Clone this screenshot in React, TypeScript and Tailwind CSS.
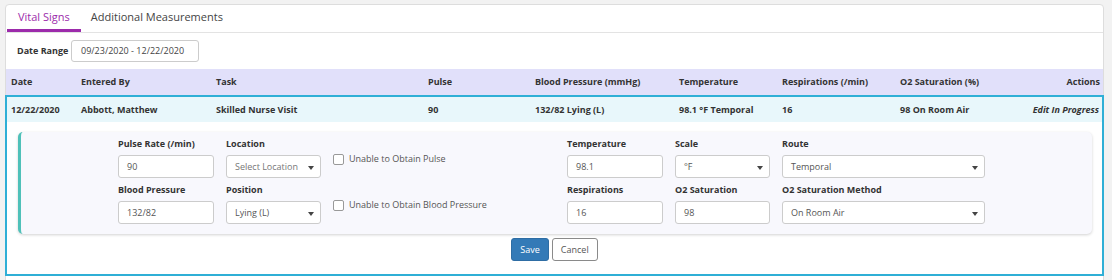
import React from "react";

const font = { fontFamily: '"Open Sans", "Liberation Sans", sans-serif' };

const columns = [
  { key: "date", label: "Date", value: "12/22/2020" },
  { key: "by", label: "Entered By", value: "Abbott, Matthew" },
  { key: "task", label: "Task", value: "Skilled Nurse Visit" },
  { key: "pulse", label: "Pulse", value: "90" },
  { key: "bp", label: "Blood Pressure (mmHg)", value: "132/82 Lying (L)" },
  { key: "temp", label: "Temperature", value: "98.1 °F Temporal" },
  { key: "resp", label: "Respirations (/min)", value: "16" },
  { key: "o2", label: "O2 Saturation (%)", value: "98 On Room Air" },
];

const gridCols =
  "grid grid-cols-[70px_135px_212px_107px_144px_103px_118px_1fr_auto] items-center";

function TextInput({ value, w }: { value: string; w: string }) {
  return (
    <div
      className={`${w} h-[23px] rounded-[3px] border border-[#cccccc] bg-white pl-[8px] text-[9px] leading-[21px] text-[#555]`}
    >
      {value}
    </div>
  );
}

function Select({ value, w, muted }: { value: string; w: string; muted?: boolean }) {
  return (
    <div
      className={`${w} flex h-[23px] items-center justify-between rounded-[3px] border border-[#cccccc] bg-white pl-[8px] pr-[6px] text-[9px] ${
        muted ? "text-[#777]" : "text-[#555]"
      }`}
    >
      <span className="whitespace-nowrap">{value}</span>
      <span className="mt-[2px] h-0 w-0 border-x-[3px] border-t-[4px] border-x-transparent border-t-[#444]" />
    </div>
  );
}

function Field({ label, children }: { label: string; children: React.ReactNode }) {
  return (
    <div className="flex flex-col gap-[5px]">
      <div className="whitespace-nowrap text-[9px] font-bold leading-[12px] text-[#333]">{label}</div>
      {children}
    </div>
  );
}

function Check({ label }: { label: string }) {
  return (
    <div className="flex items-center gap-[5px] self-start pt-[16px] text-[9px] leading-[11px] text-[#555]">
      <span className="h-[11px] w-[11px] rounded-[2px] border border-[#999] bg-white" />
      <span className="-mt-[2px] whitespace-nowrap">{label}</span>
    </div>
  );
}

export default function App() {
  return (
    <div className="h-[280px] overflow-hidden bg-[#f2f2f2] pl-[5px] pr-[8px] pt-[4px]" style={font}>
      <div className="rounded-[4px] border border-[#dddddd] bg-white">
        {/* tabs */}
        <div className="flex h-[28px] items-end border-b border-[#e3e3e3] pl-px">
          <div className="border-b-[3px] border-[#9c2bab] px-[11px] pb-[4px] text-[11px] text-[#9c2bab]">
            Vital Signs
          </div>
          <div className="px-[10px] pb-[7px] text-[11px] text-[#444]">Additional Measurements</div>
        </div>

        {/* date range */}
        <div className="flex h-[36px] items-center pl-[11px]">
          <span className="w-[54px] shrink-0 text-[9px] font-bold text-[#333]">Date Range</span>
          <div className="h-[22px] w-[128px] whitespace-nowrap rounded-[3px] border border-[#cccccc] pl-[9px] text-[9px] leading-[20px] text-[#444]">
            09/23/2020 - 12/22/2020
          </div>
        </div>

        {/* header */}
        <div className={`${gridCols} h-[26px] bg-[#e1e0fa] pl-[5px] pr-[3px] text-[9px] font-bold text-[#333]`}>
          {columns.map((c) => (
            <div key={c.key} className="whitespace-nowrap">{c.label}</div>
          ))}
          <div className="text-right">Actions</div>
        </div>

        {/* selected row */}
        <div className="-mx-px -mb-px border-2 border-[#2fafd6] pb-[13px]">
          <div className={`${gridCols} h-[25px] bg-[#e8f7fb] pl-[4px] pr-[3px] text-[9px] font-bold text-[#333]`}>
            {columns.map((c) => (
              <div key={c.key} className="whitespace-nowrap">{c.value}</div>
            ))}
            <div className="text-right italic">Edit In Progress</div>
          </div>

          <div className="ml-[11px] mr-[10px] mt-[10px] rounded-[5px] border-l-[3px] border-[#4fc1b9] bg-[#f8f8fd] pb-[10px] pl-[97px] pt-[6px] shadow-[0_1px_3px_rgba(0,0,0,0.18)]">
            <div className="flex">
              <div className="grid w-[449px] grid-cols-[96px_95px_1fr] gap-x-[12px] gap-y-[6px]">
                <Field label="Pulse Rate (/min)">
                  <TextInput value="90" w="w-[96px]" />
                </Field>
                <Field label="Location">
                  <Select value="Select Location" w="w-[95px]" muted />
                </Field>
                <Check label="Unable to Obtain Pulse" />
                <Field label="Blood Pressure">
                  <TextInput value="132/82" w="w-[96px]" />
                </Field>
                <Field label="Position">
                  <Select value="Lying (L)" w="w-[95px]" />
                </Field>
                <Check label="Unable to Obtain Blood Pressure" />
              </div>
              <div className="grid grid-cols-[96px_95px_203px] gap-x-[12px] gap-y-[6px]">
                <Field label="Temperature">
                  <TextInput value="98.1" w="w-[96px]" />
                </Field>
                <Field label="Scale">
                  <Select value="°F" w="w-[95px]" />
                </Field>
                <Field label="Route">
                  <Select value="Temporal" w="w-[203px]" />
                </Field>
                <Field label="Respirations">
                  <TextInput value="16" w="w-[96px]" />
                </Field>
                <Field label="O2 Saturation">
                  <TextInput value="98" w="w-[95px]" />
                </Field>
                <Field label="O2 Saturation Method">
                  <Select value="On Room Air" w="w-[203px]" />
                </Field>
              </div>
            </div>
          </div>

          <div className="mt-[4px] flex justify-center gap-[3px]">
            <button className="h-[23px] rounded-[3px] border border-[#2e6da4] bg-[#337ab7] px-[8px] text-[9px] text-white">
              Save
            </button>
            <button className="h-[23px] rounded-[3px] border border-[#8a8a8a] bg-white px-[8px] text-[9px] text-[#555]">
              Cancel
            </button>
          </div>
        </div>
        <div className="h-[20px]" />
      </div>
    </div>
  );
}
